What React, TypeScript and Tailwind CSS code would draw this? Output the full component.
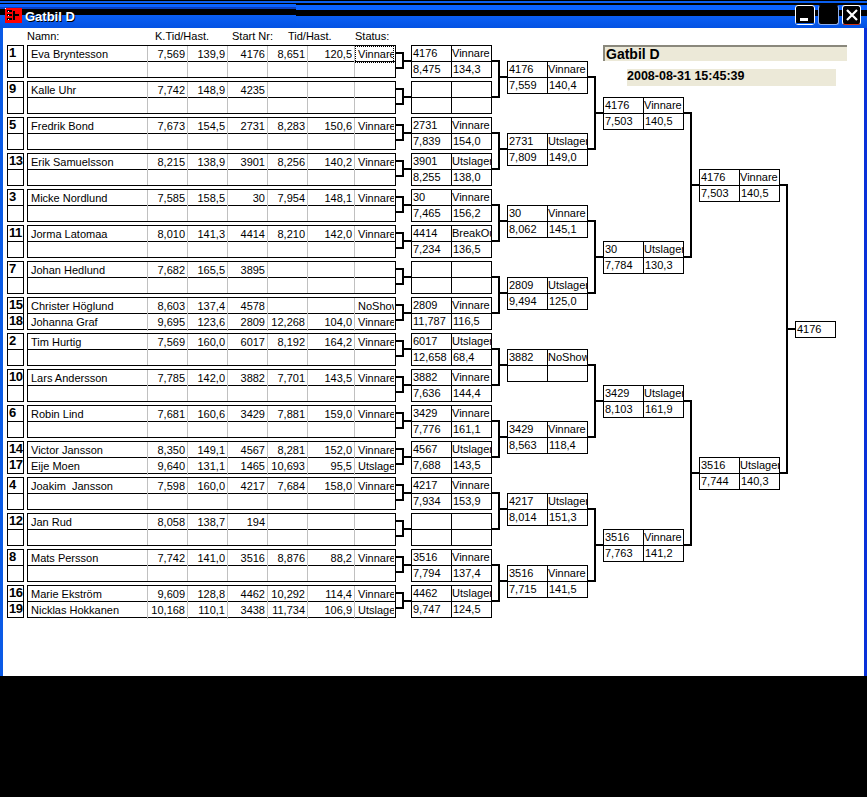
import React from 'react';

type Match = [string, string, string, string];

const empty: Match = ['', '', '', ''];

const seeds = [
  [
    ['1', 'Eva Bryntesson', '7,569', '139,9', '4176', '8,651', '120,5', 'Vinnare'],
  ],
  [['9', 'Kalle Uhr', '7,742', '148,9', '4235', '', '', '']],
  [['5', 'Fredrik Bond', '7,673', '154,5', '2731', '8,283', '150,6', 'Vinnare']],
  [['13', 'Erik Samuelsson', '8,215', '138,9', '3901', '8,256', '140,2', 'Vinnare']],
  [['3', 'Micke Nordlund', '7,585', '158,5', '30', '7,954', '148,1', 'Vinnare']],
  [['11', 'Jorma Latomaa', '8,010', '141,3', '4414', '8,210', '142,0', 'Vinnare']],
  [['7', 'Johan Hedlund', '7,682', '165,5', '3895', '', '', '']],
  [
    ['15', 'Christer Höglund', '8,603', '137,4', '4578', '', '', 'NoShow'],
    ['18', 'Johanna Graf', '9,695', '123,6', '2809', '12,268', '104,0', 'Vinnare'],
  ],
  [['2', 'Tim Hurtig', '7,569', '160,0', '6017', '8,192', '164,2', 'Vinnare']],
  [['10', 'Lars Andersson', '7,785', '142,0', '3882', '7,701', '143,5', 'Vinnare']],
  [['6', 'Robin Lind', '7,681', '160,6', '3429', '7,881', '159,0', 'Vinnare']],
  [
    ['14', 'Victor Jansson', '8,350', '149,1', '4567', '8,281', '152,0', 'Vinnare'],
    ['17', 'Eije Moen', '9,640', '131,1', '1465', '10,693', '95,5', 'Utslagen'],
  ],
  [['4', 'Joakim  Jansson', '7,598', '160,0', '4217', '7,684', '158,0', 'Vinnare']],
  [['12', 'Jan Rud', '8,058', '138,7', '194', '', '', '']],
  [['8', 'Mats Persson', '7,742', '141,0', '3516', '8,876', '88,2', 'Vinnare']],
  [
    ['16', 'Marie Ekström', '9,609', '128,8', '4462', '10,292', '114,4', 'Vinnare'],
    ['19', 'Nicklas Hokkanen', '10,168', '110,1', '3438', '11,734', '106,9', 'Utslagen'],
  ],
];

const round1: Match[] = [
  ['4176', 'Vinnare', '8,475', '134,3'],
  empty,
  ['2731', 'Vinnare', '7,839', '154,0'],
  ['3901', 'Utslagen', '8,255', '138,0'],
  ['30', 'Vinnare', '7,465', '156,2'],
  ['4414', 'BreakOut', '7,234', '136,5'],
  empty,
  ['2809', 'Vinnare', '11,787', '116,5'],
  ['6017', 'Utslagen', '12,658', '68,4'],
  ['3882', 'Vinnare', '7,636', '144,4'],
  ['3429', 'Vinnare', '7,776', '161,1'],
  ['4567', 'Utslagen', '7,688', '143,5'],
  ['4217', 'Vinnare', '7,934', '153,9'],
  empty,
  ['3516', 'Vinnare', '7,794', '137,4'],
  ['4462', 'Utslagen', '9,747', '124,5'],
];

const round2: Match[] = [
  ['4176', 'Vinnare', '7,559', '140,4'],
  ['2731', 'Utslagen', '7,809', '149,0'],
  ['30', 'Vinnare', '8,062', '145,1'],
  ['2809', 'Utslagen', '9,494', '125,0'],
  ['3882', 'NoShow', '', ''],
  ['3429', 'Vinnare', '8,563', '118,4'],
  ['4217', 'Utslagen', '8,014', '151,3'],
  ['3516', 'Vinnare', '7,715', '141,5'],
];

const round3: Match[] = [
  ['4176', 'Vinnare', '7,503', '140,5'],
  ['30', 'Utslagen', '7,784', '130,3'],
  ['3429', 'Utslagen', '8,103', '161,9'],
  ['3516', 'Vinnare', '7,763', '141,2'],
];

const round4: Match[] = [
  ['4176', 'Vinnare', '7,503', '140,5'],
  ['3516', 'Utslagen', '7,744', '140,3'],
];

const MatchBox = ({ match }: { match: Match }) => (
  <div className="grid w-[81px] grid-cols-[40px_39px] border border-black bg-white">
    <div className="h-[16px] overflow-hidden whitespace-nowrap border-r border-b border-black pl-px">{match[0]}</div>
    <div className="h-[16px] overflow-hidden whitespace-nowrap border-b border-black">{match[1]}</div>
    <div className="h-[15px] overflow-hidden whitespace-nowrap border-r border-black pl-px">{match[2]}</div>
    <div className="h-[15px] overflow-hidden whitespace-nowrap pl-px">{match[3]}</div>
  </div>
);

// one bracket line: two feeders joined by a bar, with a stub to the next round
const elbow = (x1: number, y1: number, y2: number, xv: number, ym: number, x2: number) =>
  `M${x1} ${y1}H${xv}V${y2}H${x1}M${xv} ${ym}H${x2}`;

const connectors = () => {
  const parts: string[] = [];
  for (let i = 0; i < 16; i++) {
    const t = 45 + i * 36;
    parts.push(elbow(396, t + 8, t + 23, 403, t + 16, 411));
  }
  for (let i = 0; i < 8; i++) {
    const t = 45 + i * 72;
    parts.push(elbow(492, t + 16, t + 52, 499, t + 32, 507));
  }
  for (let i = 0; i < 4; i++) {
    const t = 77 + i * 144;
    parts.push(elbow(588, t, t + 72, 595, t + 36, 603));
  }
  for (let i = 0; i < 2; i++) {
    const t = 113 + i * 288;
    parts.push(elbow(684, t, t + 144, 691, t + 72, 699));
  }
  parts.push(elbow(780, 185, 473, 787, 329, 795));
  return parts.join('');
};

export default function App() {
  return (
    <div className="relative h-[797px] w-[867px] overflow-hidden bg-black font-['Liberation_Sans',Arial,sans-serif] text-[11px] leading-[15px] text-black">
      {/* Title bar */}
      <div className="relative flex h-[28px] w-full">
        <div className="flex w-[296px] flex-col">
          <div className="h-px bg-black" />
          <div className="h-[2px] bg-[#0a5ff0]" />
          <div className="h-px bg-black" />
          <div className="h-[3px] bg-[#0a62ff]" />
          <div className="h-[2px] bg-[#0a3fc0]" />
          <div className="h-[6px] bg-black" />
          <div className="flex-1 bg-gradient-to-b from-[#0a5ff5] to-[#0452e2]" />
        </div>
        <div className="flex flex-1 flex-col">
          <div className="h-px bg-black" />
          <div className="h-[2px] bg-[#0a5ff0]" />
          <div className="h-[2px] bg-black" />
          <div className="h-[5px] bg-[#0a62ff]" />
          <div className="h-[6px] bg-black" />
          <div className="flex-1 bg-gradient-to-b from-[#0a5ff5] to-[#0452e2]" />
        </div>
        <svg className="absolute left-[5px] top-[8px]" width="17" height="15" viewBox="0 0 17 15">
          <rect width="17" height="15" fill="#f00" />
          <path d="M2 2h5v2h-5zM2 6h5v2h-5zM2 10h5v2h-5zM8 3h2v9h-2zM10 6h4v2h-4z" fill="#000" />
          <path d="M0 0h1v1h-1zM3 3h1v1h-1zM3 7h1v1h-1zM3 11h1v1h-1z" fill="#fff" />
        </svg>
        <span className="absolute left-[25px] top-[9px] text-[13px] font-bold text-white [text-shadow:1px_1px_0_#000]">
          Gatbil D
        </span>
        <div className="absolute left-[795px] top-[5px] flex gap-[3px]">
          <div className="relative h-[20px] w-[20px] rounded-[3px] border border-white bg-black">
            <div className="absolute left-[4px] top-[12px] h-[3px] w-[8px] bg-white" />
            <div className="absolute bottom-0 left-0 h-px w-full bg-[#0a5ff0]" />
          </div>
          <div className="h-[20px] w-[21px] rounded-[3px] border border-[#8fb0ee] border-t-black bg-black" />
          <div className="flex h-[20px] w-[19px] items-center justify-center rounded-[3px] border border-white border-b-[#d03010] bg-black">
            <svg width="12" height="12" viewBox="0 0 12 12">
              <path d="M1 1L11 11M11 1L1 11" stroke="#fff" strokeWidth="2.2" />
            </svg>
          </div>
        </div>
      </div>

      {/* Window body */}
      <div className="h-[648px] border-x-[3px] border-l-[#0a5ae6] border-r-[#0831d9] bg-white">
        <div className="flex h-[17px] items-center pl-[24px]">
          <span className="w-[128px]">Namn:</span>
          <span className="w-[77px]">K.Tid/Hast.</span>
          <span className="w-[56px]">Start Nr:</span>
          <span className="w-[67px]">Tid/Hast.</span>
          <span>Status:</span>
        </div>

        <div className="flex pl-[4px]">
          {/* Driver list */}
          <div className="flex w-[389px] flex-col gap-[3px]">
            {seeds.map((block, i) => {
              const rows = block.length === 2 ? block : [block[0], ['', '', '', '', '', '', '', '']];
              return (
                <div key={i} className="flex gap-[3px]">
                  <div className="w-[17px] border border-black text-[13px] font-bold leading-[14px] tracking-[-0.5px]">
                    {rows.map((r, j) => (
                      <div key={j} className={j === 0 ? 'h-[16px] border-b border-black pl-px' : 'h-[15px] pl-px'}>
                        {r[0]}
                      </div>
                    ))}
                  </div>
                  <div className="w-[369px] border border-black leading-[17px]">
                    {rows.map((r, j) => (
                      <div
                        key={j}
                        className={
                          j === 0
                            ? 'grid h-[16px] grid-cols-[120px_40px_40px_40px_40px_47px_39px] border-b border-black'
                            : 'grid h-[15px] grid-cols-[120px_40px_40px_40px_40px_47px_39px]'
                        }
                      >
                        <div className="overflow-hidden whitespace-pre border-r border-[#c0c0c0] pl-[3px]">{r[1]}</div>
                        <div className="border-r border-[#c0c0c0] pr-[2px] text-right">{r[2]}</div>
                        <div className="border-r border-[#c0c0c0] pr-[2px] text-right">{r[3]}</div>
                        <div className="border-r border-[#c0c0c0] pr-[2px] text-right">{r[4]}</div>
                        <div className="border-r border-[#c0c0c0] pr-[2px] text-right">{r[5]}</div>
                        <div className="border-r border-[#c0c0c0] pr-[2px] text-right">{r[6]}</div>
                        <div
                          className={
                            i === 0 && j === 0
                              ? 'overflow-hidden whitespace-nowrap border border-dotted border-black pl-[2px] leading-[15px]'
                              : 'overflow-hidden whitespace-nowrap pl-[3px]'
                          }
                        >
                          {r[7]}
                        </div>
                      </div>
                    ))}
                  </div>
                </div>
              );
            })}
          </div>

          {/* Bracket */}
          <div className="ml-[15px] flex gap-[15px]">
            <div className="flex flex-col gap-[3px]">
              {round1.map((m, i) => (
                <MatchBox key={i} match={m} />
              ))}
            </div>
            <div className="mt-[16px] flex flex-col gap-[39px]">
              {round2.map((m, i) => (
                <MatchBox key={i} match={m} />
              ))}
            </div>
            <div className="flex flex-col">
              <div className="h-[16px] w-[244px] border-t-2 border-l-2 border-[#8a887c] bg-[#ece9d8] pl-px text-[14px] font-bold leading-[15px]">
                Gatbil D
              </div>
              <div className="ml-[24px] mt-[8px] h-[17px] w-[209px] bg-[#ece9d8] text-[12.5px] font-bold leading-[14px]">
                2008-08-31 15:45:39
              </div>
              <div className="flex gap-[15px]">
                <div className="mt-[11px] flex flex-col gap-[111px]">
                  {round3.map((m, i) => (
                    <MatchBox key={i} match={m} />
                  ))}
                </div>
                <div className="mt-[83px] flex flex-col gap-[255px]">
                  {round4.map((m, i) => (
                    <MatchBox key={i} match={m} />
                  ))}
                </div>
                <div className="mt-[235px] h-[17px] w-[41px] border border-black pl-px">4176</div>
              </div>
            </div>
          </div>
        </div>
      </div>

      {/* Bracket lines */}
      <svg className="absolute left-0 top-0" width="867" height="676" viewBox="0 0 867 676" fill="none">
        <path d={connectors()} stroke="#000" strokeWidth="2" shapeRendering="crispEdges" />
      </svg>
    </div>
  );
}
